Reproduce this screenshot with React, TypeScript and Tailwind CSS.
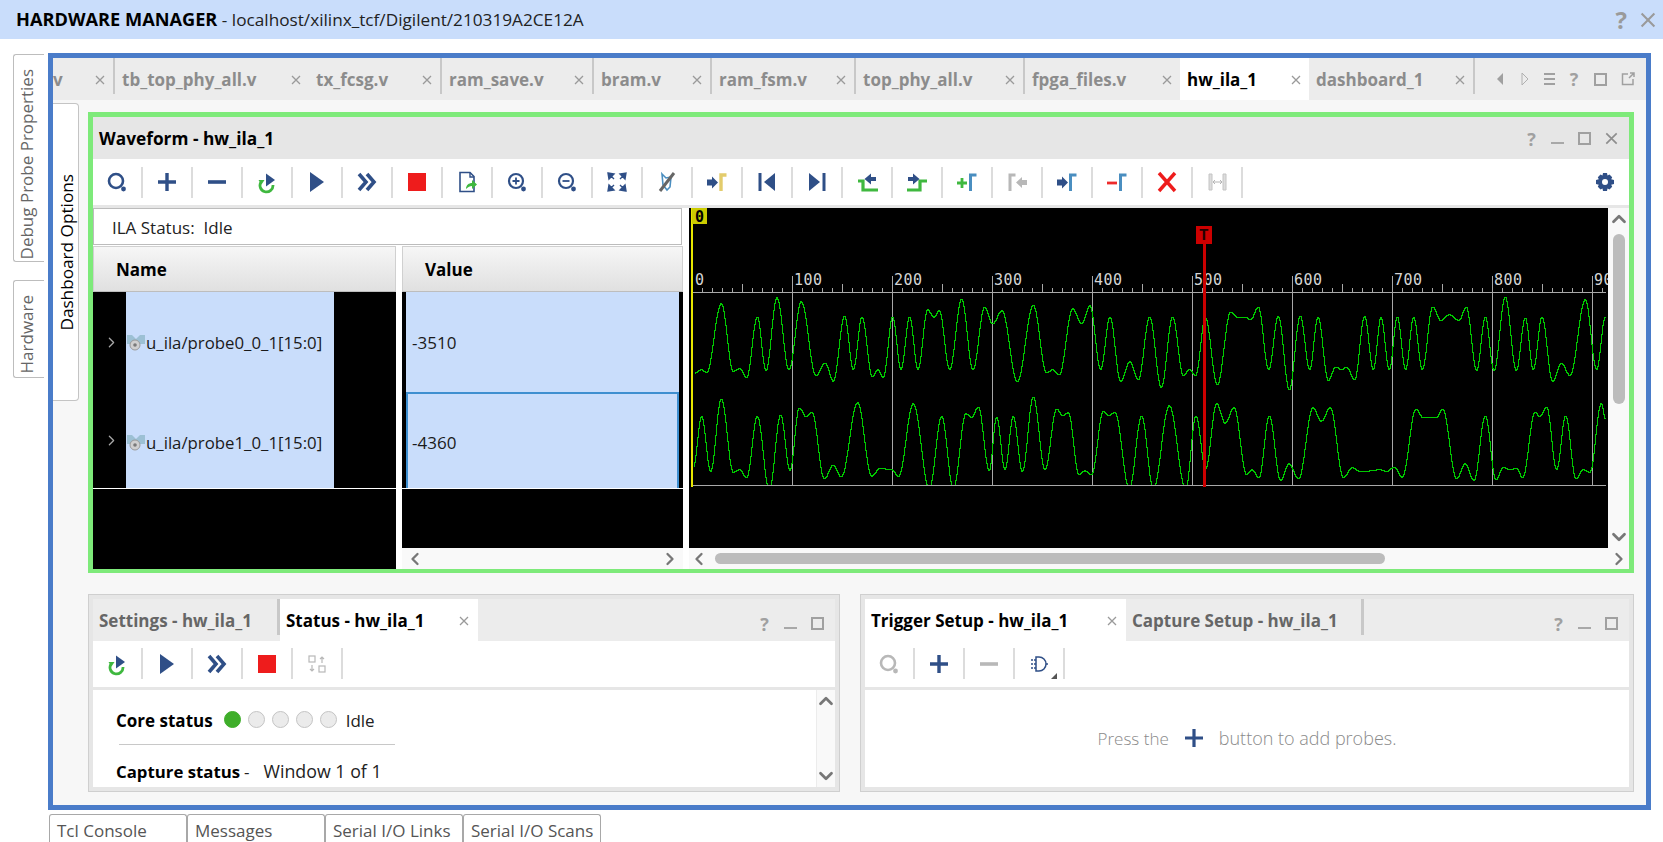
import React from "react";
import { ChevronDown, ChevronLeft, ChevronRight, ChevronUp } from "lucide-react";

const NAVY = "#2f4f87";
const GREEN = "#3fb83f";
const BLUE = "#4a8ec0";
const GRAY = "#b8b8b8";

// little 24x24 toolbar drawings
const shapes: Record<string, React.ReactNode> = {
  search: <><circle cx="11" cy="11" r="7" fill="none" stroke={NAVY} strokeWidth="2.6" /><circle cx="18.500" cy="19" r="2.400" fill={NAVY} /></>,
  searchOff: <><circle cx="11" cy="11" r="7" fill="none" stroke={GRAY} strokeWidth="2.6" /><circle cx="18.500" cy="19" r="2.400" fill={GRAY} /></>,
  plus: <path d="M12 3v18M3 12h18" stroke={NAVY} strokeWidth="3.4" />,
  minus: <path d="M3 12h18" stroke={NAVY} strokeWidth="3.6" />,
  minusOff: <path d="M3 12h18" stroke={GRAY} strokeWidth="3.6" />,
  refresh: <><path d="M6 12a6.500 6.500 0 1 0 12 3" fill="none" stroke={GREEN} strokeWidth="2.8" /><path d="M3.500 10h6l-3 4.500z" fill={GREEN} /><path d="M11 3.500l9 6.500-9 6.500z" fill={NAVY} /></>,
  play: <path d="M5 2l14 10-14 10z" fill={NAVY} />,
  forward: <path d="M4 4l7 8-7 8M12 4l7 8-7 8" fill="none" stroke={NAVY} strokeWidth="3.6" />,
  stop: <rect x="3" y="3" width="18" height="18" fill="#ee1c1c" />,
  export: <><path d="M5 2.500h10l4 4v15H5z" fill="none" stroke={NAVY} strokeWidth="1.6" /><path d="M15 2.500v4.500h4" fill="none" stroke={NAVY} strokeWidth="1.4" /><path d="M11 19c0-4 3-6 6-6v-3l5 4.500-5 4.500v-3c-2 0-4 1-6 3z" fill={GREEN} /></>,
  zoomIn: <><circle cx="11" cy="11" r="7" fill="none" stroke={NAVY} strokeWidth="2.2" /><path d="M7.500 11h7M11 7.500v7" stroke={NAVY} strokeWidth="1.8" /><circle cx="18.500" cy="19" r="2.400" fill={NAVY} /></>,
  zoomOut: <><circle cx="11" cy="11" r="7" fill="none" stroke={NAVY} strokeWidth="2.2" /><path d="M7.500 11h7" stroke={NAVY} strokeWidth="1.8" /><circle cx="18.500" cy="19" r="2.400" fill={NAVY} /></>,
  fit: <path d="M3 3l6 1-5 5zM21 3l-1 6-5-5zM3 21l1-6 5 5zM21 21l-6-1 5-5zM6 6l3 3M18 6l-3 3M6 18l3-3M18 18l-3-3" fill={NAVY} stroke={NAVY} strokeWidth="1.4" />,
  autoscale: <><path d="M7 4l4 4 5-1-1 10-3 3-4-5z" fill="none" stroke={BLUE} strokeWidth="1.6" /><path d="M19 3L5 21" stroke="#666" strokeWidth="3" /></>,
  cursor: <><path d="M2 9.500h5V6.500l6 6-6 6V15.500H2z" fill={NAVY} /><path d="M16 21V5h5.500" fill="none" stroke="#e3cc6c" strokeWidth="3.4" /></>,
  prev: <><path d="M5 3v18" stroke={NAVY} strokeWidth="3" /><path d="M20 3v18L9 12z" fill={NAVY} /></>,
  next: <><path d="M19 3v18" stroke={NAVY} strokeWidth="3" /><path d="M4 3v18l11-9z" fill={NAVY} /></>,
  stepLeft: <><path d="M3 11h5v9h15" fill="none" stroke={GREEN} strokeWidth="3.2" /><path d="M21 7h-5V3.500L9.500 9 16 14.500V11h5z" fill={NAVY} /></>,
  stepRight: <><path d="M2 20h13v-9h7" fill="none" stroke={GREEN} strokeWidth="3.2" /><path d="M3 7h5V3.500L14.500 9 8 14.500V11H3z" fill={NAVY} /></>,
  markAdd: <><path d="M2 13h10M7 8v10" stroke={GREEN} strokeWidth="2.8" /><path d="M15.500 21V5H21.500" fill="none" stroke={BLUE} strokeWidth="3" /></>,
  markBack: <><path d="M5 21V5h5.500" fill="none" stroke={GRAY} strokeWidth="3" /><path d="M22 10h-5V7l-6 5.500 6 5.500v-3h5z" fill={GRAY} /></>,
  markGo: <><path d="M2 9.500h5V6.500l6 6-6 6V15.500H2z" fill={NAVY} /><path d="M15.500 21V5H21.500" fill="none" stroke={BLUE} strokeWidth="3" /></>,
  markDel: <><path d="M2 13h10" stroke="#ee2b2b" strokeWidth="2.800" /><path d="M15.500 21V5H21.500" fill="none" stroke={BLUE} strokeWidth="3" /></>,
  cross: <path d="M4 3l16 18M20 3L4 21" stroke="#ee1c1c" strokeWidth="3.400" />,
  measure: <><path d="M4 4h3v16H4zM18 4h3v16h-3z" fill="#ddd" stroke="#c4c4c4" strokeWidth="1" /><path d="M8 12h9M8 12l2-2M8 12l2 2M17 12l-2-2M17 12l-2 2" stroke="#b4b4b4" strokeWidth="1" fill="none" /></>,
  swap: <><rect x="4" y="4" width="6" height="6" fill="none" stroke={GRAY} strokeWidth="1.200" /><rect x="14" y="14" width="6" height="6" fill="none" stroke={GRAY} strokeWidth="1.200" /><path d="M17 11V5m-2 2l2-2 2 2M7 13v6m-2-2l2 2 2-2" fill="none" stroke={GRAY} strokeWidth="1.200" /></>,
  gate: <><path d="M9 5h3a7 7 0 0 1 0 14H9z" fill="none" stroke={NAVY} strokeWidth="1.500" /><path d="M4 8h5M4 12h5M4 16h5M19 12h3" stroke={NAVY} strokeWidth="1.300" strokeDasharray="2 1" /></>,
};

const Icon = ({ name }: { name: string }) => (
  <svg width="24" height="24" viewBox="0 0 24 24">
    {shapes[name]}
  </svg>
);

const ToolButton = ({ name, corner }: { name: string; corner?: boolean }) => (
  <div className="relative flex h-[31px] w-[50px] shrink-0 items-center justify-center border-r-2 border-[#dcdcdc]">
    <Icon name={name} />
    {corner && <span className="absolute right-[6px] bottom-0 h-0 w-0 border-b-[6px] border-l-[6px] border-b-[#555] border-l-transparent" />}
  </div>
);

const Toolbar = ({ items, right, corner }: { items: string[]; right?: React.ReactNode; corner?: string }) => (
  <div className="flex h-[46px] items-center bg-white">
    {items.map((n, i) => (
      <ToolButton key={i} name={n} corner={corner === n} />
    ))}
    <div className="flex-1" />
    {right}
  </div>
);

const CloseX = ({ size = 10, color = "#9a9a9a" }: { size?: number; color?: string }) => (
  <svg width={size} height={size} viewBox="0 0 10 10" className="shrink-0">
    <path d="M1 1l8 8M9 1l-8 8" stroke={color} strokeWidth="1.300" />
  </svg>
);

const Controls = ({ close, gap }: { close?: boolean; gap: string }) => (
  <div className={`flex items-center ${gap} text-[#a0a0a0]`}>
    <span className="w-[11px] text-center text-[18px] leading-none font-bold">?</span>
    <span className="mt-[9px] h-[2px] w-[13px] bg-[#a8a8a8]" />
    <span className="h-[13px] w-[13px] border-2 border-[#a0a0a0]" />
    {close && <CloseX size={13} color="#8e8e8e" />}
  </div>
);

const fileTabs = [
  { label: "v", w: "w-[62px]", pl: "pl-0", sep: true },
  { label: "tb_top_phy_all.v", w: "w-[194px]", pl: "pl-[7px]", sep: false },
  { label: "tx_fcsg.v", w: "w-[133px]", pl: "pl-[7px]", sep: true },
  { label: "ram_save.v", w: "w-[152px]", pl: "pl-[7px]", sep: true },
  { label: "bram.v", w: "w-[118px]", pl: "pl-[7px]", sep: true },
  { label: "ram_fsm.v", w: "w-[144px]", pl: "pl-[7px]", sep: true },
  { label: "top_phy_all.v", w: "w-[169px]", pl: "pl-[7px]", sep: true },
  { label: "fpga_files.v", w: "w-[155px]", pl: "pl-[7px]", sep: false },
  { label: "hw_ila_1", w: "w-[129px]", pl: "pl-[7px]", sep: false, active: true },
  { label: "dashboard_1", w: "w-[166px]", pl: "pl-[7px]", sep: true },
];

// extrema read off the trace, as [x, y] pairs in page pixels
const toPage = (a: number[], ox: number) => {
  const out: [number, number][] = [];
  for (let i = 0; i < a.length; i += 2) out.push([ox + a[i] / 3, 200 + a[i + 1] / 3]);
  return out;
};

const wave1 = [
  ...toPage([40,520,65,508,80,516,124,310,160,512,180,505,200,532,232,350,258,510,291,292,327,508,364,304,408,525,436,488,460,542,494,347,520,507,546,350,577,528,593,508,610,530,638,350,663,507,689,350,714,507,743,328,762,350,778,331,809,507,845,296,879,507,914,320,938,370,966,331,1012,543,1060,315,1100,517,1118,508,1138,522,1178,325,1205,370,1230,316,1262,507,1290,350,1322,543,1350,484,1375,538,1409,350,1444,561], 680),
  ...toPage([38,350,70,525,88,508,107,525,136,352,172,553,212,335,235,352,255,350,272,358,295,320,326,507,355,348,388,568,421,347,449,507,474,350,505,540,527,500,545,507,560,500,584,538,614,348,640,507,663,352,688,507,712,350,737,507,761,350,787,507,818,320,843,360,868,343,897,360,919,320,950,510,976,350,1002,510,1036,290,1069,510,1096,352,1120,507,1146,350,1178,543,1204,488,1230,525,1276,298,1310,507,1336,350], 1160),
];

const wave2 = [
  ...toPage([40,800,65,648,92,813,124,595,160,815,180,808,200,832,232,648,268,870,302,644,330,810,358,622,378,648,396,636,433,835,460,794,484,829,533,607,575,827,600,804,635,807,656,827,700,610,748,865,785,648,820,865,858,640,875,650,895,620,928,810,950,650,975,807,1000,648,1027,813,1060,590,1095,807,1130,626,1148,645,1165,637,1197,823,1215,811,1235,823,1270,634,1285,645,1305,636,1348,865,1385,647,1420,865], 680),
  ...toPage([28,616,77,865,108,647,137,805,170,610,196,668,222,622,260,822,276,808,297,832,328,647,362,840,387,790,416,835,459,622,484,662,511,622,550,830,578,802,602,814,660,808,680,813,703,800,727,830,768,626,790,652,830,650,848,626,890,835,916,790,942,840,976,647,1008,838,1030,800,1050,808,1070,804,1088,832,1125,636,1140,648,1160,620,1190,807,1217,647,1248,835,1270,808,1290,815,1324,610,1337,658], 1160),
];

// cosine between extrema, then stepped the way the ILA trace is drawn
const tracePath = (pts: [number, number][]) => {
  let d = "";
  for (let i = 0; i < pts.length - 1; i++) {
    const [x0, y0] = pts[i];
    const [x1, y1] = pts[i + 1];
    for (let x = Math.ceil(x0); x < x1; x++) {
      const t = (x - x0) / (x1 - x0);
      const y = Math.round(y0 + ((y1 - y0) * (1 - Math.cos(Math.PI * t))) / 2);
      d += d ? `V${y + 0.5}H${x + 0.5}` : `M${x + 0.5} ${y + 0.5}`;
    }
  }
  return d;
};

const majors = [792, 892, 992, 1092, 1192, 1292, 1392, 1492, 1592];
const labels = ["0", "100", "200", "300", "400", "500", "600", "700", "800", "90"];
const minors = Array.from({ length: 91 }, (_, i) => 702 + i * 10).filter((x) => (x - 692) % 100 !== 0);

const Waveform = () => (
  <svg width="919" height="340" viewBox="689 208 919 340" className="block shrink-0 bg-black">
    <clipPath id="plot">
      <rect x="693" y="276" width="914" height="209" />
    </clipPath>
    <g stroke="#a8a8a8" fill="none" shapeRendering="crispEdges">
      {majors.map((x) => (
        <path key={x} d={`M${x + 0.5} 276V485`} />
      ))}
      {minors.map((x) => (
        <path key={x} d={`M${x + 0.5} ${(x - 692) % 50 === 0 ? 284 : 288}V292`} />
      ))}
      <path d="M693 292.500H1606M693 485.500H1606" />
    </g>
    <g clipPath="url(#plot)" stroke="#00c800" fill="none" shapeRendering="crispEdges">
      <path d={tracePath(wave1)} />
      <path d={tracePath(wave2)} />
    </g>
    <g fontFamily="'DejaVu Sans Mono', monospace" fontSize="15" fill="#d4d4d4" letterSpacing="0.5">
      {labels.map((l, i) => (
        <text key={l} x={i === 0 ? 695 : 694 + i * 100} y="285">
          {l}
        </text>
      ))}
    </g>
    <rect x="691" y="208" width="2" height="279" fill="#e6e600" />
    <rect x="692" y="208" width="15" height="16" fill="#cccc00" />
    <text x="695" y="222" fontFamily="'DejaVu Sans Mono', monospace" fontWeight="700" fontSize="15" fill="#000">
      0
    </text>
    <rect x="1203" y="240" width="3" height="247" fill="#cc0000" />
    <rect x="1196" y="226" width="16" height="18" fill="#cc0000" />
    <text x="1199" y="240" fontFamily="'Liberation Mono', monospace" fontWeight="700" fontSize="16" fill="#200">
      T
    </text>
  </svg>
);

const ProbeIcon = () => (
  <svg width="20" height="18" viewBox="0 0 20 18" className="shrink-0">
    <path d="M1 1h5l4 4 4-4h5v9H1z" fill="#9cc0d4" />
    <circle cx="9" cy="11" r="5" fill="#d0d0d0" stroke="#9a9a9a" />
    <circle cx="9" cy="11" r="1.800" fill="#7a7a7a" />
  </svg>
);

const ProbeName = ({ name, className, shift }: { name: string; className: string; shift: string }) => (
  <div className={`flex items-center bg-black pl-[13px] ${className}`}>
    <ChevronRight size={17} strokeWidth={1.8} color="#a8a8a8" className="mr-[6px] -ml-[3px] shrink-0" />
    <div className={`flex h-full w-[208px] items-center bg-[#c9ddfb] ${shift}`}>
      <ProbeIcon />
      <span className="text-[16.800px] text-[#1a1a1a]">{name}</span>
    </div>
  </div>
);

const Header = ({ title, className }: { title: string; className: string }) => (
  <div className={`flex h-[46px] items-center border border-[#d0d0d0] border-b-[#bdbdbd] bg-gradient-to-b from-[#f6f6f6] to-[#e0e0e0] pt-[2px] text-[17px] font-bold text-black ${className}`}>
    {title}
  </div>
);

const VScrollArrows = ({ thumb }: { thumb?: boolean }) => (
  <div className="flex h-full flex-col items-center bg-[#f9f9f9]">
    <ChevronUp size={22} strokeWidth={3} color="#777" className="shrink-0" />
    {thumb && <div className="mt-[4px] h-[170px] w-[12px] rounded-md bg-[#bcbcbc]" />}
    <div className="flex-1" />
    <ChevronDown size={22} strokeWidth={3} color="#777" className="shrink-0" />
  </div>
);

const WaveformPanel = () => (
  <div className="h-[461px] w-[1546px] border-[5px] border-[#7eea7a] bg-[#e6e6e6]">
    <div className="flex h-[42px] items-center justify-between pt-[1px] pr-[11px] pl-[6px]">
      <span className="text-[17.300px] font-bold text-black">Waveform - hw_ila_1</span>
      <Controls close gap="gap-[14px]" />
    </div>
    <Toolbar
      items={["search","plus","minus","refresh","play","forward","stop","export","zoomIn","zoomOut","fit","autoscale","cursor","prev","next","stepLeft","stepRight","markAdd","markBack","markGo","markDel","cross","measure"]}
      right={
        <svg width="24" height="24" viewBox="0 0 24 24" className="mr-[12px]">
          <path d="M10 3h4l.500 2.500 2-1 2.700 2.700-1 2 2.800.800v4l-2.800.800 1 2-2.700 2.700-2-1L14 21h-4l-.500-2.500-2 1-2.700-2.700 1-2L3 14V10l2.800-.800-1-2L7.500 4.500l2 1z" fill={NAVY} />
          <circle cx="12" cy="12" r="3" fill="#fff" />
        </svg>
      }
    />
    <div className="mt-[3px] flex h-[361px] bg-white">
      <div className="flex w-[596px] shrink-0 flex-col">
        <div className="flex h-[37px] w-[589px] items-center border border-[#bcbcbc] pt-[2px] pl-[18px] text-[17px] text-[#222]">
          ILA Status:&nbsp;&nbsp;Idle
        </div>
        <div className="mt-[1px] flex flex-1 gap-[6px]">
          <div className="flex w-[303px] flex-col">
            <Header title="Name" className="pl-[22px]" />
            <ProbeName name="u_ila/probe0_0_1[15:0]" className="h-[100px]" shift="pt-[2px]" />
            <ProbeName name="u_ila/probe1_0_1[15:0]" className="h-[96px]" shift="pt-[6px]" />
            <div className="mt-[1px] flex-1 bg-black" />
          </div>
          <div className="flex w-[281px] flex-col">
            <Header title="Value" className="pl-[22px]" />
            <div className="flex h-[196px] flex-col bg-[#c9ddfb] [box-shadow:inset_4px_0_#000,inset_-4px_0_#000]">
              <div className="flex h-[100px] items-center pt-[2px] pl-[10px] text-[17px] text-[#1a1a1a]">-3510</div>
              <div className="mx-[4px] flex h-[96px] items-center border-x-2 border-t-2 border-[#3e8fd0] pt-[4px] pl-[4px] text-[17px] text-[#1a1a1a]">-4360</div>
            </div>
            <div className="mt-[1px] h-[59px] bg-black" />
            <div className="flex h-[21px] items-center justify-between bg-[#f9f9f9] px-[3px]">
              <ChevronLeft size={20} strokeWidth={2.800} color="#777" />
              <ChevronRight size={20} strokeWidth={2.800} color="#777" />
            </div>
          </div>
        </div>
      </div>
      <div className="flex w-[940px] flex-col">
        <div className="flex h-[340px]">
          <Waveform />
          <div className="w-[21px]">
            <VScrollArrows thumb />
          </div>
        </div>
        <div className="flex h-[21px] items-center bg-[#f9f9f9]">
          <ChevronLeft size={20} strokeWidth={2.800} color="#777" className="mr-[6px] shrink-0" />
          <div className="h-[11px] w-[670px] rounded-md bg-[#bcbcbc]" />
          <div className="flex-1" />
          <ChevronRight size={20} strokeWidth={2.800} color="#777" className="shrink-0" />
        </div>
      </div>
    </div>
  </div>
);

const Dot = ({ on }: { on?: boolean }) => (
  <span className={`h-[17px] w-[17px] rounded-full border ${on ? "border-[#3fae2a] bg-[#3fae2a]" : "border-[#c4c4c4] bg-[#ebebeb]"}`} />
);

const StatusPanel = () => (
  <div className="flex h-[198px] w-[752px] flex-col border border-[#cfcfcf] bg-[#e6e6e6] p-[4px]">
    <div className="flex h-[42px] items-stretch bg-[#ececec]">
      <div className="flex w-[184px] items-center pt-[2px] pl-[6px] text-[17px] font-bold text-[#666]">Settings - hw_ila_1</div>
      <div className="h-[36px] w-[3px] bg-[#c8c8c8]" />
      <div className="flex w-[198px] items-center justify-between bg-white pt-[2px] pr-[9px] pl-[6px] text-[17px] font-bold text-black">
        Status - hw_ila_1
        <CloseX />
      </div>
      <div className="flex-1" />
      <div className="flex items-center pt-[8px] pr-[11px]">
        <Controls gap="gap-[14px]" />
      </div>
    </div>
    <Toolbar items={["refresh", "play", "forward", "stop", "swap"]} />
    <div className="mt-[3px] flex h-[98px] bg-white">
      <div className="flex-1 overflow-hidden pt-[21px] pl-[23px]">
        <div className="flex h-[20px] items-center text-[17px]">
          <span className="mr-[11px] font-bold text-black">Core status</span>
          <span className="flex -translate-y-[1px] gap-[7px]">
            <Dot on />
            <Dot />
            <Dot />
            <Dot />
            <Dot />
          </span>
          <span className="ml-[9px] text-[#222]">Idle</span>
        </div>
        <div className="mt-[13px] ml-[3px] h-[1px] w-[276px] bg-[#c8c8c8]" />
        <div className="mt-[17px] flex h-[20px] items-center">
          <span className="text-[16.800px] font-bold text-black">Capture status</span>
          <span className="ml-[4px] text-[17px] text-[#222]">-</span>
          <span className="ml-[14px] text-[17.800px] text-[#222]">Window 1 of 1</span>
        </div>
      </div>
      <div className="w-[19px] border-l border-[#ececec]">
        <VScrollArrows />
      </div>
    </div>
  </div>
);

const TriggerPanel = () => (
  <div className="flex h-[198px] w-[774px] flex-col border border-[#cfcfcf] bg-[#e6e6e6] p-[4px]">
    <div className="flex h-[42px] items-stretch bg-[#ececec]">
      <div className="flex w-[261px] items-center justify-between bg-white pt-[2px] pr-[9px] pl-[6px] text-[17px] font-bold text-black">
        Trigger Setup - hw_ila_1
        <CloseX />
      </div>
      <div className="flex w-[235px] items-center pt-[2px] pl-[6px] text-[17px] font-bold text-[#666]">Capture Setup - hw_ila_1</div>
      <div className="h-[36px] w-[3px] bg-[#c8c8c8]" />
      <div className="flex-1" />
      <div className="flex items-center pt-[8px] pr-[11px]">
        <Controls gap="gap-[14px]" />
      </div>
    </div>
    <Toolbar items={["searchOff", "plus", "minusOff", "gate"]} corner="gate" />
    <div className="mt-[3px] flex h-[98px] items-center justify-center bg-white font-light text-[#8a8a8a]">
      <span className="text-[17px]">Press the</span>
      <svg width="20" height="20" viewBox="0 0 20 20" className="mx-[15px]">
        <path d="M10 1v18M1 10h18" stroke={NAVY} strokeWidth="3.200" />
      </svg>
      <span className="text-[18px]">button to add probes.</span>
    </div>
  </div>
);

const SideTab = ({ label, className }: { label: string; className: string }) => (
  <div className={`flex w-[31px] items-center justify-center rounded-l-[3px] border border-r-0 border-[#bdbdbd] bg-white pr-[4px] text-[17px] text-[#666] ${className}`}>
    <span className="rotate-180 [writing-mode:vertical-rl]">{label}</span>
  </div>
);

const BottomTab = ({ label }: { label: string }) => (
  <div className="flex h-[28px] w-[138px] items-start rounded-t-[3px] border border-b-0 border-[#a8a8a8] bg-white pt-[4px] pl-[7px] text-[17px] leading-[24px] text-[#555]">
    {label}
  </div>
);

export default function App() {
  return (
    <div className="flex h-[842px] w-[1663px] flex-col overflow-hidden bg-white font-['Open_Sans',sans-serif]">
      <div className="flex h-[39px] shrink-0 items-center justify-between bg-[#c9ddfb] pr-[7px] pl-[16px]">
        <div className="text-[17.200px] text-[#222]">
          <span className="text-[18.200px] font-bold text-black">HARDWARE MANAGER</span>
          <span> - localhost/xilinx_tcf/Digilent/210319A2CE12A</span>
        </div>
        <div className="flex items-center gap-[13px] text-[#9a9a9a]">
          <span className="text-[24px] leading-none font-bold">?</span>
          <CloseX size={16} color="#9a9a9a" />
        </div>
      </div>

      <div className="mt-[14px] flex h-[757px] shrink-0">
        <div className="flex w-[48px] flex-col items-end gap-[18px] pt-[1px] pr-[4px]">
          <SideTab label="Debug Probe Properties" className="h-[208px] pb-[1px] [&>span]:translate-y-[7px]" />
          <SideTab label="Hardware" className="h-[98px] [&>span]:translate-y-[5px]" />
        </div>
        <div className="flex h-[757px] w-[1603px] flex-col border-[5px] border-[#4a7cc9] bg-[#f7f7f7]">
          <div className="flex h-[42px] shrink-0 items-stretch bg-[#ececec]">
            {fileTabs.map((t) => (
              <div key={t.label} className={`relative flex ${t.w} shrink-0 ${t.active ? "bg-white" : ""}`}>
                <div className={`flex flex-1 items-center justify-between pt-[2px] pr-[8px] ${t.pl} text-[17px] font-bold ${t.active ? "text-black" : "text-[#8c8c8c]"}`}>
                  {t.label}
                  <CloseX />
                </div>
                {t.sep && <div className="h-[36px] w-[2px] shrink-0 bg-[#c8c8c8]" />}
              </div>
            ))}
            <div className="flex flex-1 items-center justify-end pr-[5px]">
              <span className="flex w-[26px] justify-center"><svg width="10" height="14" viewBox="0 0 10 14"><path d="M8 1L2 7l6 6z" fill="#a0a0a0" /></svg></span>
              <span className="flex w-[24px] justify-center"><svg width="10" height="14" viewBox="0 0 10 14"><path d="M2 1l6 6-6 6z" fill="none" stroke="#b0b0b0" /></svg></span>
              <span className="flex w-[24px] justify-center"><svg width="13" height="14" viewBox="0 0 13 14"><path d="M1 2h11M1 7h11M1 12h11" stroke="#a0a0a0" strokeWidth="2" /></svg></span>
              <span className="w-[26px] text-center text-[18px] leading-none font-bold text-[#a0a0a0]">?</span>
              <span className="flex w-[27px] justify-center"><span className="h-[13px] w-[13px] border-2 border-[#a0a0a0]" /></span>
              <span className="flex w-[27px] justify-center"><svg width="14" height="14" viewBox="0 0 14 14"><path d="M7 2H1.500v10.500H12V7M8 6l5-5M9 1h4v4" fill="none" stroke="#a0a0a0" strokeWidth="1.500" /></svg></span>
            </div>
          </div>
          <div className="flex flex-1">
            <div className="mt-[3px] flex h-[298px] w-[26px] shrink-0 items-center justify-center rounded-tr-[4px] rounded-br-[4px] border-y border-r border-[#c4c4c4] bg-white pl-[3px] text-[17.200px] text-black">
              <span className="rotate-180 [writing-mode:vertical-rl]">Dashboard Options</span>
            </div>
            <div className="ml-[9px] flex flex-col pt-[12px]">
              <WaveformPanel />
              <div className="mt-[21px] flex gap-[20px]">
                <StatusPanel />
                <TriggerPanel />
              </div>
            </div>
          </div>
        </div>
      </div>

      <div className="mt-[4px] flex pl-[49px]">
        <BottomTab label="Tcl Console" />
        <BottomTab label="Messages" />
        <BottomTab label="Serial I/O Links" />
        <BottomTab label="Serial I/O Scans" />
      </div>
    </div>
  );
}
